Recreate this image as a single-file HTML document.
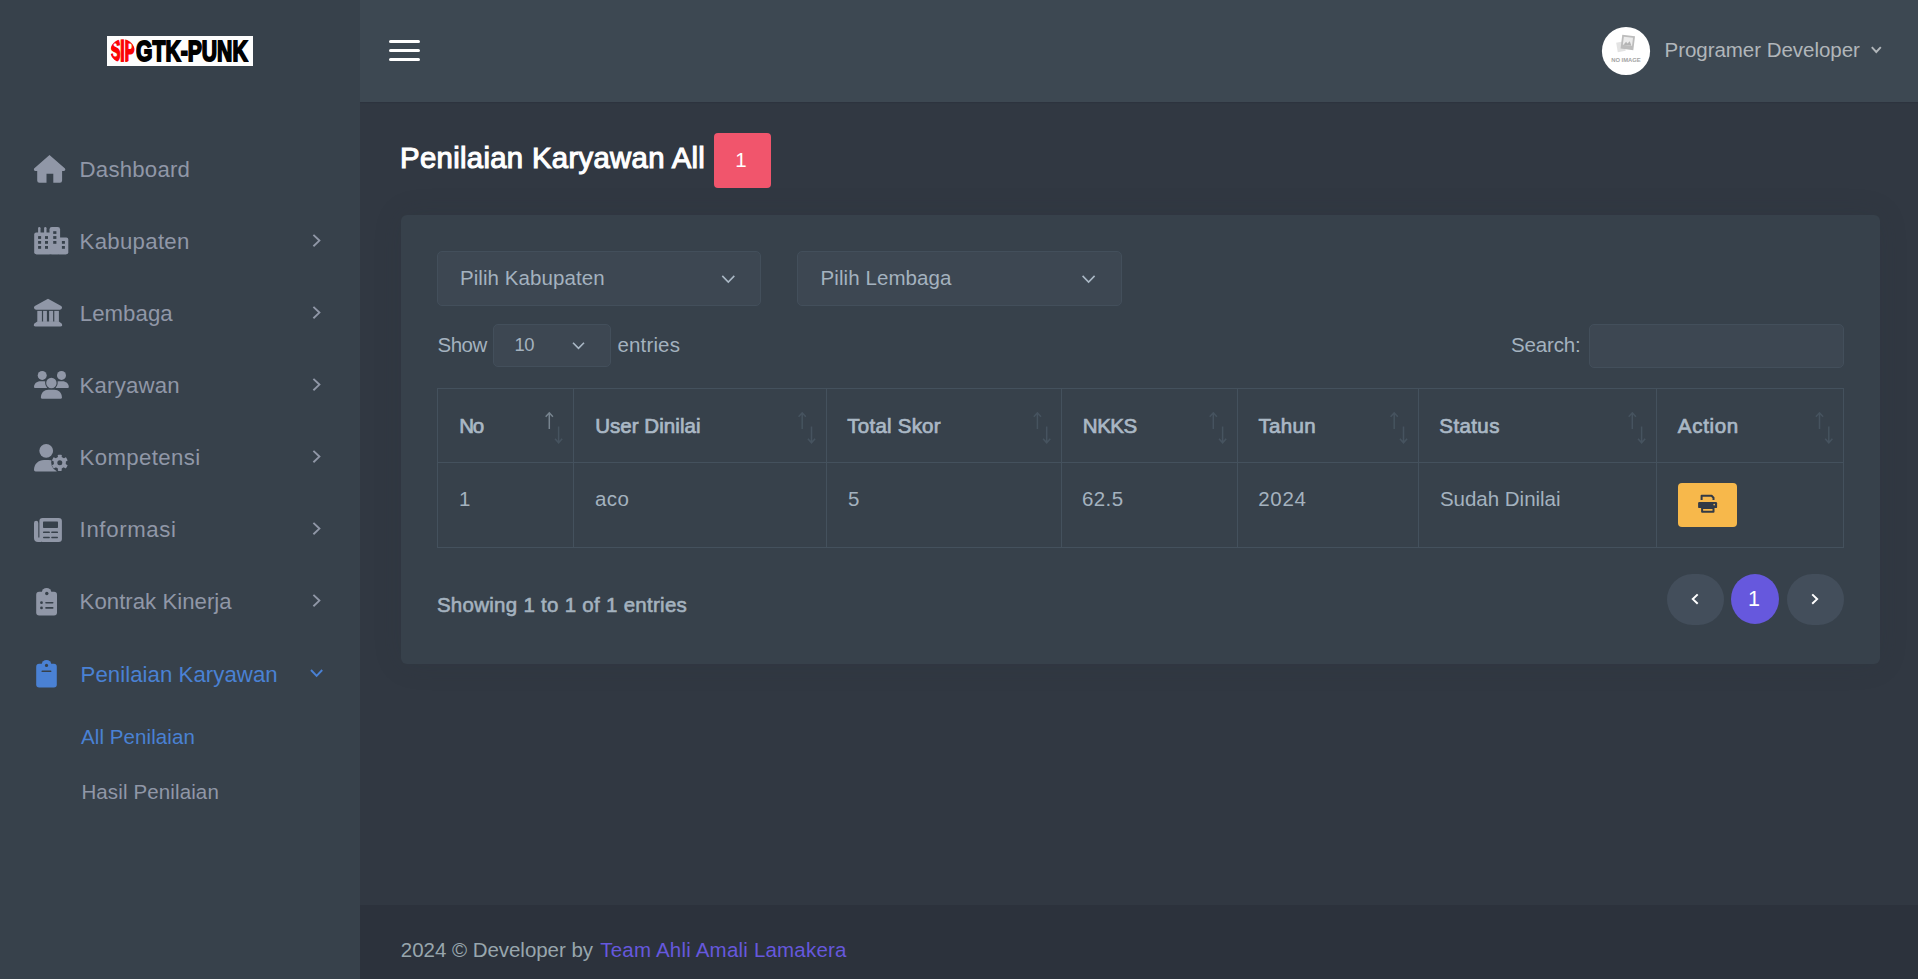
<!DOCTYPE html>
<html lang="id">
<head>
<meta charset="utf-8">
<title>Penilaian Karyawan All</title>
<style>
*{box-sizing:border-box;margin:0;padding:0}
html,body{width:1918px;height:979px;overflow:hidden}
body{background:#313842;font-family:"Liberation Sans",Arial,sans-serif;color:#aab8c5;position:relative}
.t{position:absolute;white-space:nowrap;font-family:"Liberation Sans",Arial,sans-serif}
.b{position:absolute}
#side{left:0;top:0;width:360px;height:979px;background:#37414b}
#top{left:360px;top:0;width:1558px;height:102px;background:#3d4852;box-shadow:0 1px 1px rgba(30,36,44,.18)}
#logo{left:107px;top:36px;width:146px;height:30px;background:#fdfdfd;overflow:hidden}
#logo span{position:absolute;top:-1px;font-weight:700;font-size:29.6px;line-height:32px;white-space:nowrap;transform-origin:0 50%}
#burger i{position:absolute;left:389.4px;width:30.9px;height:3px;background:#fff;border-radius:1.5px}
#badge{left:714px;top:133px;width:57px;height:55px;background:#f1556c;border-radius:4px}
#card{left:401px;top:214.6px;width:1478.8px;height:449.6px;background:#37414b;border-radius:6px;box-shadow:0 0 30px 0 rgba(40,46,56,.12)}
.sel{background:#3d4752;border:1px solid #434f5b;border-radius:5px}
#tbl{left:437px;top:388px;width:1407px;height:160px;border:1px solid #44515d}
.vl{top:388px;width:1px;height:160px;background:#44515d}
.hl{left:437px;top:462px;width:1407px;height:1px;background:#44515d}
#print{left:1678px;top:482.6px;width:59.2px;height:44.4px;background:#f7b84b;border-radius:4px}
.pg{top:574px;width:57px;height:51px;border-radius:26px;background:#434e5b}
#pgact{left:1731px;top:574px;width:48px;height:50px;border-radius:50%;background:#6658dd}
#foot{left:360px;top:905px;width:1558px;height:74px;background:#2c323c}
#ov{position:absolute;left:0;top:0;width:1918px;height:979px;overflow:visible}
</style>
</head>
<body>
<div class="b" id="top"></div>
<div class="b" id="side"></div>
<div class="b" id="logo"><span style="left:3.4px;color:#fb0404;transform:scaleX(.5);font-size:31px;-webkit-text-stroke:2px #fb0404;clip-path:ellipse(24.4px 11.8px at 25px 16px)">SIP</span><span style="left:29px;color:#000;transform:scaleX(.715);-webkit-text-stroke:1.9px #000">GTK-PUNK</span></div>
<div id="burger"><i style="top:40px"></i><i style="top:49px"></i><i style="top:58px"></i></div>

<div class="b" id="badge"></div>
<div class="b" id="card"></div>
<div class="b sel" style="left:437px;top:251px;width:324px;height:55px"></div>
<div class="b sel" style="left:797px;top:251px;width:325px;height:55px"></div>
<div class="b sel" style="left:493px;top:324px;width:118px;height:43px"></div>
<div class="b sel" style="left:1589px;top:324px;width:255px;height:44px"></div>

<div class="b" id="tbl"></div>
<div class="b hl"></div>
<div class="b vl" style="left:573px"></div>
<div class="b vl" style="left:826px"></div>
<div class="b vl" style="left:1061px"></div>
<div class="b vl" style="left:1237px"></div>
<div class="b vl" style="left:1418px"></div>
<div class="b vl" style="left:1656px"></div>
<div class="b" id="print"></div>
<div class="b pg" style="left:1667px"></div>
<div class="b" id="pgact"></div>
<div class="b pg" style="left:1787px"></div>
<div class="b" id="foot"></div>

<svg id="ov" viewBox="0 0 1918 979">
<!-- avatar -->
<circle cx="1626" cy="51" r="24.1" fill="#fff"/>
<g transform="rotate(-10 1620.8 46.7)"><rect x="1616.9" y="42" width="8" height="9.6" fill="#e3e3e3"/></g>
<g transform="rotate(7 1627.8 42.4)"><rect x="1621.4" y="35.4" width="12.8" height="14" fill="#bcbcbc"/><rect x="1623.2" y="37.2" width="9.2" height="8.2" fill="#ebebeb"/><path d="M1623.8 45.2 L1626 42 L1627.6 43.6 L1629.6 41 L1631.8 45.2 Z" fill="#b4b4b4"/></g>
<text x="1626" y="61.9" font-family="Liberation Sans, Arial, sans-serif" font-size="6" font-weight="700" fill="#a3a3a3" text-anchor="middle" textLength="29.6" lengthAdjust="spacingAndGlyphs">NO IMAGE</text>
<polyline points="1871.8,47.2 1876.3,52 1880.8,47.2" fill="none" stroke="#b1b6ba" stroke-width="1.9"/>

<!-- sidebar icons -->
<g fill="#9097a7">
<!-- home -->
<path d="M49.5 154.9 L65 168.6 Q66.1 170.3 64.2 170.9 L62.1 170.9 L62.1 180.6 Q62.1 182.8 59.9 182.8 L53.3 182.8 L53.3 173.7 L46.5 173.7 L46.5 182.8 L39.4 182.8 Q37.2 182.8 37.2 180.6 L37.2 170.9 L35 170.9 Q33.1 170.3 34.1 168.6 Z"/>
<!-- city -->
<rect x="34.2" y="232.4" width="17" height="21.9" rx="2"/>
<rect x="38.1" y="227" width="2.4" height="7" rx="1.2"/>
<rect x="44.1" y="227" width="2.4" height="7" rx="1.2"/>
<rect x="49.5" y="227.1" width="10.6" height="27.2" rx="2.4"/>
<rect x="57" y="237.4" width="11.3" height="16.9" rx="2"/>
<rect x="36.2" y="249" width="30" height="5.3"/>
<g fill="#37414b">
<rect x="38.1" y="236.1" width="3" height="2.8"/><rect x="45" y="236.1" width="3" height="2.8"/>
<rect x="38.1" y="241" width="3" height="2.8"/><rect x="45" y="241" width="3" height="2.8"/>
<rect x="38.1" y="246" width="3" height="2.8"/><rect x="45" y="246" width="3" height="2.8"/>
<rect x="53.2" y="231.2" width="3.2" height="2.7"/><rect x="53.2" y="236.1" width="3.2" height="2.8"/><rect x="53.2" y="241" width="3.2" height="2.8"/>
<rect x="61.9" y="241" width="3" height="2.8"/><rect x="61.9" y="246" width="3" height="2.8"/>
</g>
<!-- landmark -->
<path d="M48 298.8 L61.2 305.9 Q62.3 306.7 62 308 Q61.6 309.8 59.8 309.8 L36.2 309.8 Q34.4 309.8 34 308 Q33.7 306.7 34.8 305.9 Z"/>
<rect x="37.3" y="310.9" width="4.6" height="11"/><rect x="43.1" y="310.9" width="3.8" height="11"/><rect x="49.1" y="310.9" width="4" height="11"/><rect x="54.3" y="310.9" width="4.6" height="11"/>
<path d="M37.3 321.6 L58.9 321.6 L61.6 323.5 Q62.3 324.2 62.1 325.2 Q61.8 326.5 60.4 326.5 L35.6 326.5 Q34.2 326.5 33.9 325.2 Q33.7 324.2 34.4 323.5 Z"/>
<!-- users -->
<circle cx="42.2" cy="375.4" r="4.5"/><circle cx="61.5" cy="375.4" r="4.5"/>
<path d="M34 387 C34 383.5 36.8 381.2 40.4 381.2 L44 381.2 C45.4 381.2 46.6 381.6 47.6 382.3 L47.6 388 L35 388 Q34 388 34 387 Z"/>
<path d="M68.8 387 C68.8 383.5 66 381.2 62.4 381.2 L58.8 381.2 C57.4 381.2 56.2 381.6 55.2 382.3 L55.2 388 L67.8 388 Q68.8 388 68.8 387 Z"/>
<circle cx="51.4" cy="383" r="6.3" fill="#37414b"/>
<circle cx="51.4" cy="383" r="5.2"/>
<path d="M40.9 397.4 C40.9 392.8 44.2 389.8 48.4 389.8 L54.4 389.8 C58.6 389.8 61.9 392.8 61.9 397.4 Q61.9 398.8 60.5 398.8 L42.3 398.8 Q40.9 398.8 40.9 397.4 Z"/>
<!-- user gear -->
<circle cx="46.2" cy="450.8" r="6.9"/>
<path d="M34 469.8 C34 463.8 38.6 460 44 460 L48.4 460 C52 460 54.6 461.2 56.6 463 L56.6 471.6 L35.6 471.6 Q34 471.6 34 469.8 Z"/>
<circle cx="59.8" cy="462.8" r="8.6" fill="#37414b"/>
<circle cx="59.8" cy="462.8" r="6.1"/>
<g>
<rect x="57.9" y="454.7" width="3.8" height="16.2" rx=".6"/>
<rect x="57.9" y="454.7" width="3.8" height="16.2" rx=".6" transform="rotate(60 59.8 462.8)"/>
<rect x="57.9" y="454.7" width="3.8" height="16.2" rx=".6" transform="rotate(120 59.8 462.8)"/>
</g>
<circle cx="59.8" cy="462.8" r="2.5" fill="#37414b"/>
<!-- newspaper -->
<rect x="39.4" y="517.9" width="22.5" height="24" rx="3.2"/>
<path d="M34 523 A2.15 2.15 0 0 1 38.3 523 L38.3 537.4 L41 537.4 L41 541.9 L38 541.9 A4 4 0 0 1 34 537.9 Z"/>
<g fill="#37414b">
<rect x="43" y="521.5" width="15" height="6.5" rx=".7"/>
<rect x="43" y="531.5" width="6.9" height="1.6" rx=".7"/><rect x="51.2" y="531.5" width="6.8" height="1.6" rx=".7"/>
<rect x="43" y="536.7" width="6.9" height="1.6" rx=".7"/><rect x="51.2" y="536.7" width="6.8" height="1.6" rx=".7"/>
</g>
<!-- clipboard list -->
<rect x="36.2" y="591.8" width="20.8" height="23.8" rx="3"/>
<circle cx="46.6" cy="592.7" r="4.8"/>
<g fill="#37414b">
<circle cx="46.8" cy="593.5" r="1.7"/>
<circle cx="41.5" cy="602.7" r="1.4"/><circle cx="41.5" cy="607.9" r="1.4"/>
<rect x="45.2" y="601.9" width="8.3" height="1.7" rx=".8"/><rect x="45.2" y="607.1" width="8.3" height="1.7" rx=".8"/>
</g>
</g>
<!-- clipboard active -->
<g fill="#4a81d4">
<rect x="36.2" y="663.8" width="20.6" height="23.8" rx="3"/>
<circle cx="46.5" cy="664.7" r="4.8"/>
<g fill="#37414b"><circle cx="46.5" cy="665.4" r="1.6"/><rect x="41.5" y="670.6" width="9.9" height="1.5" rx=".7"/></g>
</g>
<!-- sidebar chevrons -->
<g fill="none" stroke="#9097a7" stroke-width="1.9">
<polyline points="313.4,234.9 319.4,240.6 313.4,246.3"/>
<polyline points="313.4,306.9 319.4,312.6 313.4,318.3"/>
<polyline points="313.4,378.9 319.4,384.6 313.4,390.3"/>
<polyline points="313.4,450.9 319.4,456.6 313.4,462.3"/>
<polyline points="313.4,522.9 319.4,528.6 313.4,534.3"/>
<polyline points="313.4,594.9 319.4,600.6 313.4,606.3"/>
</g>
<polyline points="311,670 316.6,675.8 322.2,670" fill="none" stroke="#4a81d4" stroke-width="1.9"/>

<!-- select chevrons -->
<g fill="none" stroke="#aab8c5" stroke-width="1.6">
<polyline points="722.3,275.9 728.3,282.1 734.3,275.9"/>
<polyline points="1082.6,275.9 1088.6,282.1 1094.6,275.9"/>
<polyline points="573,342.8 578.5,348.4 584,342.8"/>
</g>

<!-- sort arrows -->
<path d="M549.3 429 L549.3 413 M545.7 416.8 L549.3 412.8 L552.9 416.8" fill="none" stroke="#77848f" stroke-width="1.5"/>
<path d="M558.6 426.5 L558.6 442.6 M555.0 438.8 L558.6 442.8 L562.2 438.8" fill="none" stroke="#46535f" stroke-width="1.5"/>
<path d="M802.2 429 L802.2 413 M798.6 416.8 L802.2 412.8 L805.8 416.8" fill="none" stroke="#46535f" stroke-width="1.5"/>
<path d="M811.5 426.5 L811.5 442.6 M807.9 438.8 L811.5 442.8 L815.1 438.8" fill="none" stroke="#46535f" stroke-width="1.5"/>
<path d="M1037.4 429 L1037.4 413 M1033.8 416.8 L1037.4 412.8 L1041.0 416.8" fill="none" stroke="#46535f" stroke-width="1.5"/>
<path d="M1046.7 426.5 L1046.7 442.6 M1043.1 438.8 L1046.7 442.8 L1050.3 438.8" fill="none" stroke="#46535f" stroke-width="1.5"/>
<path d="M1213.3 429 L1213.3 413 M1209.7 416.8 L1213.3 412.8 L1216.9 416.8" fill="none" stroke="#46535f" stroke-width="1.5"/>
<path d="M1222.6 426.5 L1222.6 442.6 M1219.0 438.8 L1222.6 442.8 L1226.2 438.8" fill="none" stroke="#46535f" stroke-width="1.5"/>
<path d="M1394.2 429 L1394.2 413 M1390.6 416.8 L1394.2 412.8 L1397.8 416.8" fill="none" stroke="#46535f" stroke-width="1.5"/>
<path d="M1403.5 426.5 L1403.5 442.6 M1399.9 438.8 L1403.5 442.8 L1407.1 438.8" fill="none" stroke="#46535f" stroke-width="1.5"/>
<path d="M1632.3 429 L1632.3 413 M1628.7 416.8 L1632.3 412.8 L1635.9 416.8" fill="none" stroke="#46535f" stroke-width="1.5"/>
<path d="M1641.6 426.5 L1641.6 442.6 M1638.0 438.8 L1641.6 442.8 L1645.2 438.8" fill="none" stroke="#46535f" stroke-width="1.5"/>
<path d="M1819.5 429 L1819.5 413 M1815.9 416.8 L1819.5 412.8 L1823.1 416.8" fill="none" stroke="#46535f" stroke-width="1.5"/>
<path d="M1828.8 426.5 L1828.8 442.6 M1825.2 438.8 L1828.8 442.8 L1832.4 438.8" fill="none" stroke="#46535f" stroke-width="1.5"/>

<!-- printer -->
<g>
<path d="M1701.6 500 L1701.6 495.8 L1711.6 495.8 L1713.5 497.7 L1713.5 500" fill="none" stroke="#323a46" stroke-width="2" stroke-linejoin="round"/>
<rect x="1698.1" y="502.1" width="19" height="6" rx="1.2" fill="#323a46"/>
<circle cx="1714.2" cy="504.6" r=".85" fill="#f7b84b"/>
<rect x="1702.1" y="508" width="11.4" height="3.8" fill="none" stroke="#323a46" stroke-width="2" stroke-linejoin="round"/>
</g>

<!-- pagination chevrons -->
<g fill="none" stroke="#fff" stroke-width="2">
<polyline points="1697.7,594.4 1692.8,599.1 1697.7,603.8"/>
<polyline points="1812.2,594.4 1817.1,599.1 1812.2,603.8"/>
</g>

</svg>

<div class="t" style="left:79.60px;top:154.81px;font-size:22.2px;line-height:29px;color:#9097a7;letter-spacing:0.225px;">Dashboard</div>
<div class="t" style="left:79.60px;top:226.81px;font-size:22.2px;line-height:29px;color:#9097a7;letter-spacing:0.300px;">Kabupaten</div>
<div class="t" style="left:79.80px;top:298.81px;font-size:22.2px;line-height:29px;color:#9097a7;letter-spacing:0.053px;">Lembaga</div>
<div class="t" style="left:79.60px;top:370.81px;font-size:22.2px;line-height:29px;color:#9097a7;letter-spacing:0.182px;">Karyawan</div>
<div class="t" style="left:79.60px;top:442.81px;font-size:22.2px;line-height:29px;color:#9097a7;letter-spacing:0.374px;">Kompetensi</div>
<div class="t" style="left:79.60px;top:514.81px;font-size:22.2px;line-height:29px;color:#9097a7;letter-spacing:0.636px;">Informasi</div>
<div class="t" style="left:79.60px;top:586.81px;font-size:22.2px;line-height:29px;color:#9097a7;letter-spacing:0.025px;">Kontrak Kinerja</div>
<div class="t" style="left:80.60px;top:659.81px;font-size:22.2px;line-height:29px;color:#4a81d4;letter-spacing:0.055px;">Penilaian Karyawan</div>
<div class="t" style="left:81.10px;top:723.40px;font-size:20.5px;line-height:27px;color:#4a81d4;letter-spacing:0.073px;">All Penilaian</div>
<div class="t" style="left:81.40px;top:778.40px;font-size:20.5px;line-height:27px;color:#9097a7;letter-spacing:0.128px;">Hasil Penilaian</div>
<div class="t" style="left:1664.50px;top:36.40px;font-size:20.5px;line-height:27px;color:#b1b6ba;letter-spacing:-0.036px;">Programer Developer</div>
<div class="t" style="left:400.05px;top:138.85px;font-size:29.3px;line-height:38px;color:#ffffff;letter-spacing:0.322px;-webkit-text-stroke:1.1px #ffffff;">Penilaian Karyawan All</div>
<div class="t" style="left:460.00px;top:264.40px;font-size:20.5px;line-height:27px;color:#a4b2bf;letter-spacing:0.071px;">Pilih Kabupaten</div>
<div class="t" style="left:820.50px;top:264.40px;font-size:20.5px;line-height:27px;color:#a4b2bf;letter-spacing:0.082px;">Pilih Lembaga</div>
<div class="t" style="left:437.50px;top:331.40px;font-size:20.5px;line-height:27px;color:#a4b2bf;letter-spacing:-0.492px;">Show</div>
<div class="t" style="left:514.50px;top:332.62px;font-size:18.4px;line-height:24px;color:#a4b2bf;letter-spacing:-0.528px;">10</div>
<div class="t" style="left:617.40px;top:331.40px;font-size:20.5px;line-height:27px;color:#a4b2bf;letter-spacing:0.170px;">entries</div>
<div class="t" style="left:1511.00px;top:331.40px;font-size:20.5px;line-height:27px;color:#a4b2bf;letter-spacing:-0.159px;">Search:</div>
<div class="t" style="left:459.15px;top:412.40px;font-size:20.5px;line-height:27px;color:#aab8c5;letter-spacing:-1.304px;-webkit-text-stroke:0.7px #aab8c5;">No</div>
<div class="t" style="left:595.15px;top:412.40px;font-size:20.5px;line-height:27px;color:#aab8c5;letter-spacing:0.050px;-webkit-text-stroke:0.7px #aab8c5;">User Dinilai</div>
<div class="t" style="left:847.35px;top:412.40px;font-size:20.5px;line-height:27px;color:#aab8c5;letter-spacing:0.231px;-webkit-text-stroke:0.7px #aab8c5;">Total Skor</div>
<div class="t" style="left:1082.85px;top:412.40px;font-size:20.5px;line-height:27px;color:#aab8c5;letter-spacing:-0.517px;-webkit-text-stroke:0.7px #aab8c5;">NKKS</div>
<div class="t" style="left:1258.55px;top:412.40px;font-size:20.5px;line-height:27px;color:#aab8c5;letter-spacing:0.312px;-webkit-text-stroke:0.7px #aab8c5;">Tahun</div>
<div class="t" style="left:1439.35px;top:412.40px;font-size:20.5px;line-height:27px;color:#aab8c5;letter-spacing:0.387px;-webkit-text-stroke:0.7px #aab8c5;">Status</div>
<div class="t" style="left:1677.85px;top:412.40px;font-size:20.5px;line-height:27px;color:#aab8c5;letter-spacing:0.685px;-webkit-text-stroke:0.7px #aab8c5;">Action</div>
<div class="t" style="left:459.00px;top:485.40px;font-size:20.5px;line-height:27px;color:#a4b2bf;">1</div>
<div class="t" style="left:595.00px;top:485.40px;font-size:20.5px;line-height:27px;color:#a4b2bf;letter-spacing:0.424px;">aco</div>
<div class="t" style="left:848.00px;top:485.40px;font-size:20.5px;line-height:27px;color:#a4b2bf;">5</div>
<div class="t" style="left:1082.00px;top:485.40px;font-size:20.5px;line-height:27px;color:#a4b2bf;letter-spacing:0.401px;">62.5</div>
<div class="t" style="left:1258.20px;top:485.40px;font-size:20.5px;line-height:27px;color:#a4b2bf;letter-spacing:0.732px;">2024</div>
<div class="t" style="left:1439.90px;top:485.40px;font-size:20.5px;line-height:27px;color:#a4b2bf;letter-spacing:-0.012px;">Sudah Dinilai</div>
<div class="t" style="left:436.90px;top:591.40px;font-size:20.5px;line-height:27px;color:#a4b2bf;letter-spacing:0.277px;-webkit-text-stroke:0.6px #a4b2bf;">Showing 1 to 1 of 1 entries</div>
<div class="t" style="left:400.80px;top:936.40px;font-size:20.5px;line-height:27px;color:#98a6ad;letter-spacing:-0.035px;">2024 © Developer by</div>
<div class="t" style="left:600.30px;top:936.40px;font-size:20.5px;line-height:27px;color:#6658dd;letter-spacing:0.199px;">Team Ahli Amali Lamakera</div>
<div class="t" style="left:735.20px;top:145.80px;font-size:20.5px;line-height:27px;color:#ffffff;">1</div>
<div class="t" style="left:1747.90px;top:584.85px;font-size:21.5px;line-height:28px;color:#ffffff;">1</div>
</body>
</html>
